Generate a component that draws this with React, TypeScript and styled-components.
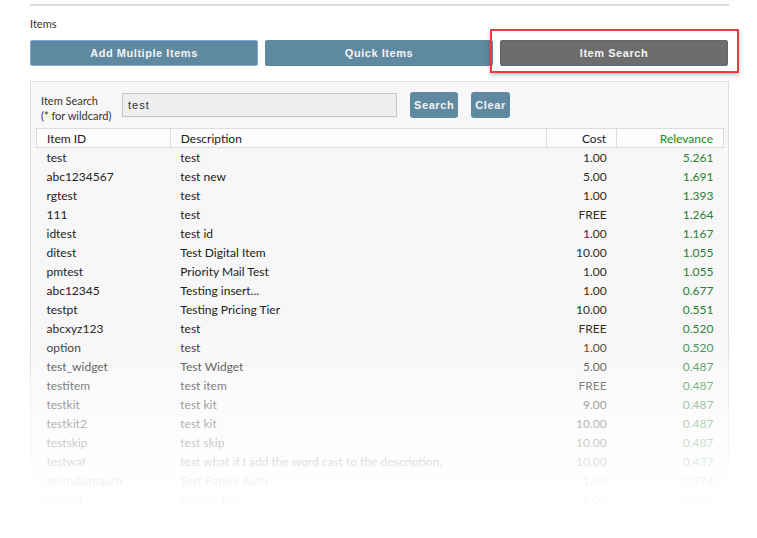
import React from 'react'
import styled, { createGlobalStyle } from 'styled-components'

const GlobalStyle = createGlobalStyle`
    html, body {
        margin: 0;
        padding: 0;
        background: #ffffff;
    }
    body {
        font-family: Lato, "Liberation Sans", sans-serif;
        overflow: hidden;
    }
`

const Page = styled.div`
    position: relative;
    width: 757px;
    height: 538px;
    overflow: hidden;
    padding: 4px 28px 0 30px;
    box-sizing: border-box;
`

const Rule = styled.div`
    border-top: 2px solid #dcdcdc;
`

const SectionLabel = styled.div`
    font-size: 11px;
    color: #333;
    margin: 11px 0 10px 0;
    line-height: 13px;
`

const TabRow = styled.div`
    display: grid;
    grid-template-columns: 1fr 1fr 1fr;
    column-gap: 7px;
    margin-right: 1px;
`

const TabButton = styled.div<{ active?: boolean; focused?: boolean }>`
    position: relative;
    height: 26px;
    border-radius: 2px;
    background: ${p => (p.active ? '#6d6d6d' : '#5f88a1')};
    border: 1px solid ${p => (p.focused ? '#7fa9d6' : p.active ? '#666' : '#5f88a1')};
    box-sizing: border-box;
    color: #f4f4f4;
    font-family: "Liberation Sans", Arial, sans-serif;
    font-weight: bold;
    font-size: 11px;
    letter-spacing: 0.55px;
    display: flex;
    align-items: center;
    justify-content: center;
`

const Highlight = styled.div`
    position: absolute;
    left: -11px;
    top: -12px;
    right: -12px;
    bottom: -8px;
    border: 2px solid #ec3b3f;
    box-shadow: 0 2px 4px rgba(0, 0, 0, 0.25);
    pointer-events: none;
`

const Panel = styled.div`
    margin-top: 15px;
    background: #f7f7f7;
    border: 1px solid #dedede;
    padding: 8px 4px 20px 5px;
    height: 460px;
    box-sizing: border-box;
`

const SearchRow = styled.div`
    display: flex;
    align-items: flex-start;
    padding-left: 5px;
    margin-bottom: 5px;
`

const SearchLabel = styled.div`
    width: 81px;
    margin-top: 3px;
    font-size: 11px;
    line-height: 15px;
    color: #333;
`

const SearchInput = styled.div`
    margin-top: 3px;
    width: 275px;
    height: 24px;
    box-sizing: border-box;
    background: #eeeeee;
    border: 1px solid #c6c6c6;
    font-family: "Liberation Sans", Arial, sans-serif;
    font-size: 11px;
    letter-spacing: 1px;
    color: #333;
    padding-left: 5px;
    display: flex;
    align-items: center;
`

const SmallButton = styled.div<{ gap: number }>`
    margin-left: ${p => p.gap}px;
    margin-top: 2px;
    height: 26px;
    padding: 0 4px;
    border-radius: 3px;
    background: #5f88a1;
    color: #f4f4f4;
    font-family: "Liberation Sans", Arial, sans-serif;
    font-weight: bold;
    font-size: 11px;
    letter-spacing: 0.6px;
    display: flex;
    align-items: center;
`

const Table = styled.table`
    width: 100%;
    border-collapse: collapse;
    font-size: 12px;
    color: #222;
`

const HeadCell = styled.th<{ align?: string; width: number; green?: boolean }>`
    width: ${p => p.width}px;
    text-align: ${p => p.align || 'left'};
    font-weight: normal;
    background: #fcfcfc;
    border: 1px solid #dcdcdc;
    height: 19px;
    padding: 0 10px;
    box-sizing: border-box;
    color: ${p => (p.green ? '#178a17' : '#222')};
`

const Cell = styled.td<{ align?: string; kind?: 'rel' | 'cost' }>`
    text-align: ${p => p.align || 'left'};
    height: 19px;
    padding: 0 10px;
    color: ${p => (p.kind === 'rel' ? '#2a7f35' : p.kind === 'cost' ? '#332a1c' : '#222')};
    white-space: nowrap;
`

const Fade = styled.div`
    position: absolute;
    left: 0;
    right: 0;
    top: 325px;
    bottom: 0;
    background: linear-gradient(
        to bottom,
        rgba(255, 255, 255, 0) 0%,
        rgba(255, 255, 255, 0.55) 38%,
        rgba(255, 255, 255, 0.93) 72%,
        rgba(255, 255, 255, 1) 92%
    );
    pointer-events: none;
`

const rows: [string, string, string, string][] = [
    ['test', 'test', '1.00', '5.261'],
    ['abc1234567', 'test new', '5.00', '1.691'],
    ['rgtest', 'test', '1.00', '1.393'],
    ['111', 'test', 'FREE', '1.264'],
    ['idtest', 'test id', '1.00', '1.167'],
    ['ditest', 'Test Digital Item', '10.00', '1.055'],
    ['pmtest', 'Priority Mail Test', '1.00', '1.055'],
    ['abc12345', 'Testing insert...', '1.00', '0.677'],
    ['testpt', 'Testing Pricing Tier', '10.00', '0.551'],
    ['abcxyz123', 'test', 'FREE', '0.520'],
    ['option', 'test', '1.00', '0.520'],
    ['test_widget', 'Test Widget', '5.00', '0.487'],
    ['testitem', 'test item', 'FREE', '0.487'],
    ['testkit', 'test kit', '9.00', '0.487'],
    ['testkit2', 'test kit', '10.00', '0.487'],
    ['testskip', 'test skip', '10.00', '0.487'],
    ['testwaf', 'test what if I add the word cast to the description.', '10.00', '0.437'],
    ['testfutureauth', 'Test Future Auth', '1.00', '0.374'],
    ['btctest', 'Bitcoin Test', '1.00', '0.351'],
    ['cointest', 'Coin Test', '1.00', '0.351'],
]

function App() {
    return (
        <Page>
            <GlobalStyle />
            <Rule />
            <SectionLabel>Items</SectionLabel>
            <TabRow>
                <TabButton focused>Add Multiple Items</TabButton>
                <TabButton>Quick Items</TabButton>
                <TabButton active>
                    Item Search
                    <Highlight />
                </TabButton>
            </TabRow>

            <Panel>
                <SearchRow>
                    <SearchLabel>
                        Item Search
                        <br />
                        (* for wildcard)
                    </SearchLabel>
                    <SearchInput>test</SearchInput>
                    <SmallButton gap={13}>Search</SmallButton>
                    <SmallButton gap={13}>Clear</SmallButton>
                </SearchRow>

                <Table>
                    <thead>
                        <tr>
                            <HeadCell width={134}>Item ID</HeadCell>
                            <HeadCell width={377}>Description</HeadCell>
                            <HeadCell width={70} align="right">Cost</HeadCell>
                            <HeadCell width={107} align="right" green>Relevance</HeadCell>
                        </tr>
                    </thead>
                    <tbody>
                        {rows.map(([id, desc, cost, rel], i) => (
                            <tr key={i}>
                                <Cell>{id}</Cell>
                                <Cell>{desc}</Cell>
                                <Cell align="right" kind="cost">{cost}</Cell>
                                <Cell align="right" kind="rel">{rel}</Cell>
                            </tr>
                        ))}
                    </tbody>
                </Table>
            </Panel>
            <Fade />
        </Page>
    )
}

export default App
